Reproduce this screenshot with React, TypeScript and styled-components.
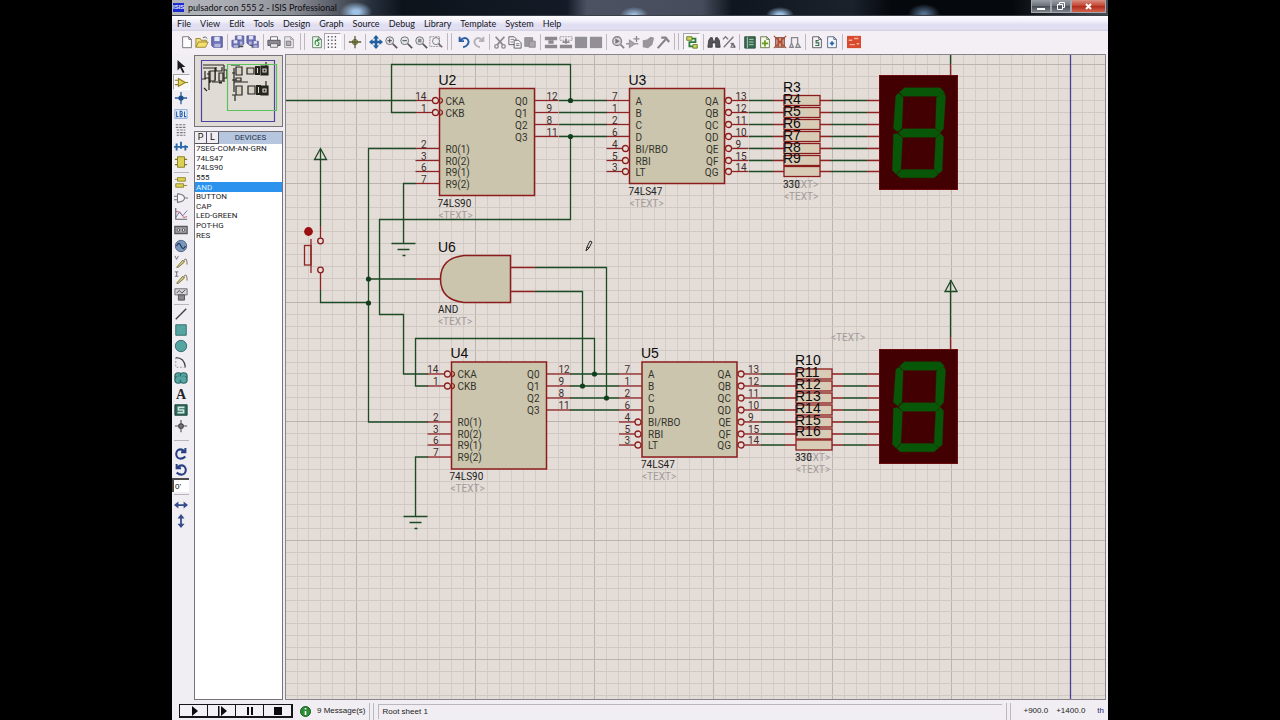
import React from 'react';
import styled, { createGlobalStyle, css } from 'styled-components';

const GlobalStyle = createGlobalStyle`
  * { box-sizing: border-box; }
  body { margin: 0; background: #000; font-family: Lato, 'Open Sans', sans-serif; }
  button, input { font: inherit; color: inherit; margin: 0; padding: 0; border: 0; background: none; }
  svg { display: block; }
`;

const Page = styled.div`
  min-height: 100vh;
  padding: 0 172px;
  display: flex;
  background: #000;
`;

const Window = styled.main`
  flex: 1;
  min-width: 0;
  display: flex;
  flex-direction: column;
  background: #f1eef3;
`;

/* ---------- title bar ---------- */

const TitleBar = styled.header`
  height: 16px;
  flex: none;
  display: flex;
  align-items: center;
  gap: 4px;
  padding-left: 1px;
  border-bottom: 1px solid #3b3f48;
  background:
    radial-gradient(ellipse 16px 10px at 184px 12px, #9fc3e6 20%, transparent),
    radial-gradient(ellipse 14px 8px at 462px 15px, #9dbfe0 10%, transparent),
    radial-gradient(ellipse 14px 8px at 608px 15px, #9dc2e6 20%, transparent),
    radial-gradient(ellipse 16px 10px at 752px 14px, #54708f 10%, transparent),
    linear-gradient(90deg, #b4b6bc 0, #a9abb2 60px, #8e9098 120px, #5b5f69 160px, #26303c 200px, #0d131b 230px,
      #141b26 395px, #4d5263 415px, #474c5c 530px, #10161f 560px, #1b222c 680px, #05080c 720px, #05080c 840px, #47505a 100%);
`;

const AppIcon = styled.span`
  width: 11px;
  height: 9px;
  background: #1c2bd0;
  color: #e8ecff;
  font: bold 6px/9px 'Liberation Sans', sans-serif;
  text-align: center;
`;

const Title = styled.h1`
  margin: 0;
  flex: 1;
  font-size: 9px;
  line-height: 14px;
  font-weight: 400;
  color: #0c0c10;
`;

const WindowButtons = styled.div`
  display: flex;
  align-self: flex-start;
  height: 13px;
  margin-right: 2px;
`;

const WindowButton = styled.button<{ $close?: boolean }>`
  width: ${(p) => (p.$close ? 35 : 20)}px;
  height: 13px;
  display: grid;
  place-items: center;
  border: 1px solid #a4a8ad;
  border-top: 0;
  background: ${(p) =>
    p.$close ? 'linear-gradient(#d99082, #c2402c 50%, #b02c1a 51%, #d4604c)' : 'linear-gradient(#9a9fa5, #6a7077 50%, #474d55 51%, #7c838a)'};
`;

/* ---------- menu ---------- */

const MenuBar = styled.nav`
  height: 15px;
  flex: none;
  display: flex;
  align-items: center;
  padding-left: 1px;
  background: linear-gradient(#fdfdff, #f1f0fa 35%, #dfddf1 60%, #e2e0f2 85%, #d0cedf);
`;

const MenuItem = styled.button`
  padding: 0 5px 0 4px;
  font-size: 9px;
  line-height: 14px;
  color: #16161c;
`;

/* ---------- tool bars ---------- */

const ToolBar = styled.div`
  height: 23px;
  flex: none;
  display: flex;
  align-items: center;
  padding: 0 0 2px 7px;
  background: #f3eff4;
  overflow: hidden;
`;

const ToolButton = styled.button<{ $active?: boolean; $side?: boolean }>`
  width: ${(p) => (p.$active ? 17 : 15)}px;
  height: ${(p) => (p.$side ? 16 : 17)}px;
  flex: none;
  display: grid;
  place-items: center;
  ${(p) => p.$active && css`
    border: 1px solid #a9a5ab;
    border-right-color: #fff;
    border-bottom-color: #fff;
    background: #f8f6f8;
  `}
`;

const Divider = styled.span<{ $wide?: boolean }>`
  width: ${(p) => (p.$wide ? 7 : 6)}px;
  height: 16px;
  flex: none;
  display: flex;
  justify-content: center;
  &::before { content: ''; width: 1px; background: #bdb8c0; }
`;

const Grip = styled.span`
  width: 13px;
  height: 17px;
  flex: none;
  display: flex;
  justify-content: center;
  gap: 3px;
  &::before, &::after { content: ''; width: 1px; background: #bdb8c0; }
`;

const Body = styled.div`
  flex: 1;
  min-height: 0;
  display: flex;
  padding-bottom: 2px;
`;

const SideTools = styled.div`
  width: 22px;
  flex: none;
  display: flex;
  flex-direction: column;
  align-items: center;
  padding: 4px 4px 0 0;
`;

const SideDivider = styled.span<{ $size: number }>`
  height: ${(p) => p.$size}px;
  width: 15px;
  flex: none;
  display: flex;
  flex-direction: column;
  justify-content: center;
  &::before { content: ''; height: 1px; background: #b9b4bb; }
`;

const AngleInput = styled.input`
  width: 17px;
  height: 14px;
  align-self: flex-start;
  padding-left: 1px;
  background: #fff;
  border: solid #4c4c4c;
  border-width: 2px 0 0 2px;
  font: 8px/10px 'Liberation Sans', sans-serif;
`;

/* ---------- side panel ---------- */

const SidePanel = styled.aside`
  width: 89px;
  flex: none;
  display: flex;
  flex-direction: column;
  gap: 4px;
  padding-top: 1px;
`;

const Preview = styled.div`
  height: 72px;
  flex: none;
  border: 1px solid #77737a;
  background: #e1dbd5;
  overflow: hidden;
`;

const DeviceBox = styled.section`
  flex: 1;
  display: flex;
  flex-direction: column;
  border: 1px solid #77737a;
  background: #fff;
  font-family: Roboto, sans-serif;
  font-size: 8px;
`;

const DeviceHeader = styled.div`
  height: 12px;
  flex: none;
  display: flex;
  background: #b7c6df;
  color: #22304c;
`;

const DeviceKey = styled.button`
  width: 12px;
  font-size: 9px;
  line-height: 11px;
  background: #f0eef2;
  color: #111;
  border: solid #55525a;
  border-width: 0 1px 1px 0;
`;

const DeviceTitle = styled.h2`
  margin: 0;
  flex: 1;
  font-size: 8px;
  line-height: 12px;
  font-weight: 400;
  text-align: center;
`;

const DeviceList = styled.ul`
  margin: 0;
  padding: 0;
  height: 96px;
  display: grid;
  grid-auto-rows: 1fr;
  list-style: none;
`;

const Device = styled.li<{ $selected?: boolean }>`
  display: flex;
  align-items: center;
  padding-left: 1px;
  line-height: 9px;
  white-space: nowrap;
  color: ${(p) => (p.$selected ? '#d6ecff' : '#1b1b1f')};
  background: ${(p) => (p.$selected ? '#2b93ee' : 'transparent')};
`;

/* ---------- sheet ---------- */

const Sheet = styled.section`
  flex: 1;
  min-width: 0;
  margin: 0 2px 0 2px;
  border: 1px solid #88848a;
  background: #e4ddd7;
  overflow: hidden;
  position: relative;
`;

const Drawing = styled.svg`
  position: absolute;
  inset: 0;
  width: 100%;
  height: 100%;
  font-family: Roboto, 'Liberation Sans', sans-serif;
  font-size: 10px;
  .wire { stroke: #1b4a25; fill: none; stroke-width: 1.3; }
  .pin { stroke: #8f2222; fill: none; stroke-width: 1.3; }
  .body { stroke: #8c1c1c; fill: #cbc5ae; stroke-width: 1.5; }
  .bubble { stroke: #8c1c1c; fill: #e4ddd7; stroke-width: 1.3; }
  .name { fill: #33332a; }
  .num { fill: #3f2c2c; }
  .ref { fill: #0c0c0c; font-family: 'Liberation Sans', sans-serif; font-size: 14px; }
  .part { fill: #222; }
  .hint { fill: #a29b9b; }
`;

/* ---------- status bar ---------- */

const StatusBar = styled.footer`
  height: 18px;
  flex: none;
  display: flex;
  align-items: center;
  padding: 0 4px 0 7px;
  font: 8px/14px 'Liberation Sans', sans-serif;
  color: #1b1b22;
  white-space: nowrap;
`;

const PlayGroup = styled.div`
  display: flex;
  height: 14px;
  border: 1px solid #16161a;
`;

const PlayButton = styled.button`
  width: 28px;
  display: grid;
  place-items: center;
  border: 1px solid #16161a;
  border-width: 0 1px 1px 0;
  background: #f3f1f4;
`;

const Messages = styled.span`
  display: flex;
  align-items: center;
  gap: 6px;
  padding-left: 7px;
`;

const SheetName = styled.span`
  flex: 1;
  height: 15px;
  padding-left: 3px;
  border: solid #bcb7bf;
  border-width: 1px 0 0 1px;
`;

const Coords = styled.span`
  display: flex;
  gap: 8px;
  padding-left: 8px;
  & > b { font-weight: 400; color: #25256e; padding-left: 4px; }
`;

/* ---------- icons ---------- */

const doc = (fill = '#fff', stroke = '#6c6870') => <path d="M3 2h7l3 3v9.500H3zM10 2v3h3" fill={fill} stroke={stroke} />;
const glass = (
  <>
    <circle cx="6.500" cy="6.500" r="4.500" fill="#e4e6ea" stroke="#66646c" />
    <path d="M10 10l5 5" stroke="#55535a" strokeWidth="2" />
  </>
);
const disk = (x: number, y: number, s: number) => (
  <g transform={`translate(${x} ${y}) scale(${s})`}>
    <path d="M0 0h12v12H2L0 10z" fill="#6f73b8" stroke="#45488a" />
    <path d="M3 0h6v5H3z" fill="#dfe2f3" />
    <path d="M3 8h7v4H3z" fill="#b5b8dc" />
  </g>
);

const icons: Record<string, React.ReactNode> = {
  new: doc(),
  open: <><path d="M1 14V4h5l1 2h6v2" fill="#f3dc7a" stroke="#94802c" /><path d="M1 14l3-6h11l-3 6z" fill="#f5e06c" stroke="#94802c" /><path d="M9 3q3-2 5 1" stroke="#555" fill="none" /></>,
  save: disk(2, 2, 1),
  importSection: <>{disk(5, 1, 0.8)}{disk(1, 6, 0.7)}<path d="M9 13h5" stroke="#444" strokeWidth="2" /></>,
  exportSection: <>{disk(1, 1, 0.8)}{disk(7, 7, 0.6)}<path d="M4 12h3v3" stroke="#444" fill="none" /></>,
  print: <><path d="M4 6V2h8v4" fill="#fff" stroke="#66636a" /><path d="M1 6h14v6H1z" fill="#8b8991" stroke="#4f4d55" /><path d="M4 10h8v4H4z" fill="#eee" stroke="#66636a" /></>,
  area: <>{doc('#e9e7ea', '#96939a')}<path d="M5 7h5v5H5z" fill="#b5b2b8" stroke="#77747b" /></>,
  redraw: <>{doc('#eef6ee', '#5b7a60')}<path d="M6 11V8q0-2 3-2M8 4.500L10 6 8 7.500M10 8v3q0 1-3 1" stroke="#2f8a3e" fill="none" strokeWidth="1.300" /></>,
  grid: <path d="M2 2h12M2 6h12M2 10h12M2 14h12" stroke="#55535a" strokeWidth="1.500" strokeDasharray="1.500 2.500" />,
  origin: <><circle cx="8" cy="8" r="3" fill="#b9b86a" stroke="#55552a" /><path d="M8 1v14M1 8h14" stroke="#5a5a34" strokeWidth="1.500" /></>,
  pan: <><path d="M8 2v12M2 8h12" stroke="#235f9f" strokeWidth="3" /><path d="M8 0l3.500 4h-7zM8 16l3.500-4h-7zM0 8l4-3.500v7zM16 8l-4-3.500v7z" fill="#235f9f" /></>,
  zoomIn: <>{glass}<path d="M4 6.500h5M6.500 4v5" stroke="#333" /></>,
  zoomOut: <>{glass}<path d="M4 6.500h5" stroke="#333" /></>,
  zoomAll: <>{glass}<path d="M4.500 4.500h4v4h-4z" fill="#8b8991" /></>,
  zoomArea: <><path d="M1 2h11v11H1z" fill="none" stroke="#88858c" strokeDasharray="2 1" /><circle cx="8" cy="7" r="4" fill="#eef0f4" stroke="#77747b" /><path d="M11 10l4 4" stroke="#66636a" strokeWidth="2" /></>,
  undo: <path d="M3 2v5h5M3 7q4-5 8-3 4 3 1 7-1 2-5 3" fill="none" stroke="#2b5ea8" strokeWidth="2.200" />,
  redo: <path d="M13 2v5H8M13 7Q9 2 5 4 1 7 4 11q1 2 5 3" fill="none" stroke="#b3b0b7" strokeWidth="2.200" />,
  cut: <><path d="M3 2l8 9M13 2L5 11" stroke="#8b888f" strokeWidth="2" /><circle cx="4" cy="13" r="2" fill="none" stroke="#8b888f" strokeWidth="1.500" /><circle cx="12" cy="13" r="2" fill="none" stroke="#8b888f" strokeWidth="1.500" /></>,
  copy: <><path d="M1 2h6l2 2v7H1z" fill="#f6f4f7" stroke="#55535a" /><path d="M7 6h5l3 3v6H7z" fill="#f6f4f7" stroke="#55535a" /><path d="M3 5h4M3 8h3M9 10h4M9 12h4" stroke="#77747b" /></>,
  paste: <><path d="M2 3h9v10H2z" fill="#99969d" stroke="#8b888f" /><path d="M7 7h7v7H7z" fill="#aaa7ae" stroke="#88858c" /></>,
  blockCopy: <><path d="M1 2h14v4H1zM1 11h14v4H1z" fill="#8b888f" /><path d="M5 8h6" stroke="#8b888f" strokeWidth="4" /></>,
  blockMove: <><path d="M1 2h14v4H1z" fill="none" stroke="#8b888f" strokeDasharray="2 1" /><path d="M1 11h14v4H1zM7 4h2v6H7zM4 7h8v2H4z" fill="#8b888f" /></>,
  block: <path d="M1 2h14v13H1z" fill="#929096" />,
  pick: <><circle cx="7" cy="7" r="5" fill="#d5d3d8" stroke="#85828a" strokeWidth="1.500" /><path d="M5 4l5 3-5 3z" fill="#77747b" /><path d="M11 11l4 4" stroke="#85828a" strokeWidth="2" /></>,
  make: <><path d="M4 6l6 4-6 4zM0 10h4M10 10h4" fill="#aaa7ae" stroke="#9a979e" strokeWidth="1.500" /><path d="M12 1v7M8.500 4.500h7" stroke="#8b888f" strokeWidth="1.500" /></>,
  pack: <path d="M2 6l5-1 4-3 4 1-2 8-5 4-6-1z" fill="#98959c" />,
  hammer: <path d="M2 15l9-10M6 3h5l4 5" fill="none" stroke="#85828a" strokeWidth="2.500" />,
  autoroute: <><path d="M2 2h6v4H2zM9 11h5v4H9z" fill="#d6d95a" stroke="#55731f" /><path d="M8 4h4v4H5v5h4" fill="none" stroke="#2d7a3a" strokeWidth="2" /></>,
  find: <path d="M1 14l1-8 2-3h2l1 4h2l1-4h2l2 3 1 8h-5V9H6v5z" fill="#55535a" stroke="#3c3a40" />,
  property: <><path d="M2 14L13 2M1 5l3-3 3 3M10 9l5 5" stroke="#77747b" strokeWidth="1.500" fill="none" /><path d="M10 14l2.500-5 2.500 5z" fill="none" stroke="#55535a" /></>,
  explorer: <><path d="M2 2h12v13H2z" fill="#3b6b51" stroke="#244634" /><path d="M5 2v13M7 5h5M7 8h5M7 11h5" stroke="#b9d6c4" /></>,
  addSheet: <>{doc('#f7fbe9', '#5f7040')}<path d="M8 6v7M4.500 9.500h7" stroke="#6b9a24" strokeWidth="2" /></>,
  delSheet: <><path d="M3 3h10v11H3z" fill="#c9a292" stroke="#6a4438" /><path d="M1 1l14 14M15 1L1 15M6 3v11M10 3v11" stroke="#b5482e" strokeWidth="1.500" /></>,
  exitSheet: <path d="M4 9V3h7v6M4 9l-2 5h4zM11 9l-2 5h5z" stroke="#8b888f" strokeWidth="1.500" fill="none" />,
  bom: <>{doc('#f5f5f5', '#55535a')}<path d="M10 6.500H7v2.500h3v3H6" fill="none" stroke="#3b6b51" strokeWidth="1.300" /></>,
  erc: <>{doc('#f5f8ff', '#55607a')}<path d="M8 7v5M5.500 9.500h5" stroke="#2b6ba8" strokeWidth="2" /></>,
  ares: <><path d="M0 1h16v14H0z" fill="#d9492c" /><path d="M2 6h4M8 4h5M3 11h6M11 10h3" stroke="#f7b09c" strokeWidth="1.500" /></>,

  arrow: <path d="M4 1l9 8H9l3 6-2 1-3-6-3 3z" fill="#1c1c20" />,
  component: <path d="M5 4l8 4.500L5 13zM1 6h4M1 11h4M13 8.500h3" fill="#e4d250" stroke="#8c7c22" strokeWidth="1.200" />,
  junction: <><path d="M8 1v14M1 8h14" stroke="#2b5e9a" strokeWidth="1.500" /><circle cx="8" cy="8" r="3" fill="#1d4f8d" /></>,
  label: <><path d="M1 3h14v10H1z" fill="#e6eefb" stroke="#7ea3d4" /><path d="M3 5v6h2M7 5v6h1.500q2-1.500 0-3 2-1.500 0-3zM12 5v6h2" stroke="#2b5ea8" fill="none" strokeWidth="1.200" /></>,
  script: <path d="M2 2h12M2 5h12M3 8h10M3 11h10M3 14h10" stroke="#77747b" strokeWidth="1.300" strokeDasharray="3 1" />,
  bus: <path d="M0 9h16M3 13V5M8 11V3M13 13V7" stroke="#2b6aa8" strokeWidth="2.200" />,
  subcircuit: <><path d="M4 2h8v12H4z" fill="#ddd054" stroke="#7e7626" /><path d="M1 5h3M1 11h3M12 5h3M12 11h3" stroke="#7e7626" strokeWidth="1.500" /></>,
  terminal: <><path d="M4 3h9v4H4zM2 10h9v4H2z" fill="#ded253" stroke="#8c8023" /><path d="M1 5h3M11 12h4" stroke="#8c8023" /></>,
  devicePin: <path d="M4 3v10q8-1 8-5T4 3M0 6h4M0 10h4M12 8h4" fill="#f6f5f7" stroke="#77747b" strokeWidth="1.200" />,
  graph: <><path d="M2 1v13h13" stroke="#66636a" fill="none" strokeWidth="1.300" /><path d="M2 12l4-6 4 4 5-6" stroke="#5b6ca8" fill="none" /><path d="M2 5l5 1 4 6 4-1" stroke="#a85b6a" fill="none" /></>,
  tape: <><path d="M1 4h14v8H1z" fill="#a7a4ab" stroke="#5b5960" strokeWidth="1.500" /><circle cx="5" cy="8" r="1.500" fill="#fff" stroke="#444" /><circle cx="11" cy="8" r="1.500" fill="#fff" stroke="#444" /></>,
  generator: <><circle cx="8" cy="8" r="6.500" fill="#7b96ba" stroke="#4b6283" /><path d="M3 8q2.500-6 5 0t5 0" fill="none" stroke="#1f355a" strokeWidth="1.300" /></>,
  voltage: <><path d="M1 1l2 4 2-4" fill="none" stroke="#66636a" /><path d="M3 14l7-8 2 2-7 6z" fill="#ddd073" stroke="#6c6840" /><path d="M11 7q2-4 3-2t1 6" fill="none" stroke="#6c6840" /></>,
  current: <><path d="M3 1v5M1 1h4M1 6h4" fill="none" stroke="#66636a" /><path d="M3 14l7-8 2 2-7 6z" fill="#ddd073" stroke="#6c6840" /><path d="M11 7q2-4 3-2t1 6" fill="none" stroke="#6c6840" /></>,
  instrument: <><path d="M1 2h14v7H1z" fill="#d4d2d7" stroke="#66636a" /><path d="M3 7l3-3 3 3 4-4" stroke="#444" fill="none" /><path d="M5 9h7v6H5z" fill="#8b888f" stroke="#4f4d55" /></>,
  line: <path d="M2 14L14 2" stroke="#44424a" strokeWidth="1.600" />,
  box: <path d="M2 2h12v12H2z" fill="#55a5a3" stroke="#2c6664" />,
  circle: <circle cx="8" cy="8" r="6.500" fill="#55a5a3" stroke="#2c6664" />,
  arc: <><path d="M2 3q10 0 11 11" fill="none" stroke="#44424a" strokeWidth="1.400" /><path d="M2 3v11h11" fill="none" stroke="#88858c" strokeDasharray="2 2" /></>,
  path: <><g fill="#55a5a3" stroke="#2c6664" strokeWidth="1.400"><circle cx="5" cy="6" r="4" /><circle cx="11" cy="6" r="4" /><circle cx="5" cy="10" r="4" /><circle cx="11" cy="10" r="4" /></g><path d="M3 6h10v4H3z" fill="#55a5a3" /></>,
  symbol: <><path d="M1 2h14v12H1z" fill="#2f6b5d" stroke="#163a31" /><path d="M12 5H5v3h6v3H4" fill="none" stroke="#cfe5dd" strokeWidth="1.800" /></>,
  marker: <><path d="M8 1v14M1 8h14" stroke="#55535a" strokeWidth="1.300" /><circle cx="8" cy="8" r="2.500" fill="none" stroke="#44424a" strokeWidth="1.500" /></>,
  cw: <path d="M13 1v5H8M12 5Q8 1 4 4 1 8 4 12q4 3 9-1" fill="none" stroke="#2a4186" strokeWidth="2.300" />,
  ccw: <path d="M3 1v5h5M4 5q4-4 8-1 3 4 0 8-4 3-9-1" fill="none" stroke="#2a4186" strokeWidth="2.300" />,
  flipH: <path d="M0 8l5-4v3h6V4l5 4-5 4V9H5v3z" fill="#354b8c" />,
  flipV: <path d="M8 0l4 5H9v6h3l-4 5-4-5h3V5H4z" fill="#354b8c" />,
};

const TextGlyph = styled.span`
  font: bold 14px/15px 'Liberation Serif', serif;
  color: #26242a;
`;

const Icon = ({ name }: { name: string }) => (
  <svg width="14" height="14" viewBox="0 0 16 16" fill="none" aria-hidden="true">{icons[name]}</svg>
);

const topTools = [
  'new', 'open', 'save', '|', 'importSection', 'exportSection', '|', 'print', 'area', '#',
  'redraw', '*grid', '|', 'origin', '|', 'pan', 'zoomIn', 'zoomOut', 'zoomAll', 'zoomArea', '#',
  'undo', 'redo', '|', 'cut', 'copy', 'paste', '|', 'blockCopy', 'blockMove', 'block', 'block', '||',
  'pick', 'make', 'pack', 'hammer', '#', '*autoroute', '|', 'find', 'property', '|',
  'explorer', 'addSheet', 'delSheet', 'exitSheet', '||', 'bom', 'erc', '||', 'ares',
];

const modeTools = ['arrow', '*component', 'junction', 'label', 'script', 'bus', 'subcircuit'];
const gadgetTools = ['terminal', 'devicePin', 'graph', 'tape', 'generator', 'voltage', 'current', 'instrument'];
const shapeTools = ['line', 'box', 'circle', 'arc', 'path', 'A', 'symbol', 'marker'];

const Tool = ({ id, side }: { id: string; side?: boolean }) => {
  const name = id.replace('*', '');
  return (
    <ToolButton type="button" aria-label={name} $active={id.startsWith('*')} $side={side}>
      {name === 'A' ? <TextGlyph>A</TextGlyph> : <Icon name={name} />}
    </ToolButton>
  );
};

/* ---------- schematic ---------- */

const PITCH = 11.9;
const rowY = (i: number) => Math.round(i * PITCH);

const GridLines = () => {
  const lines: React.ReactNode[] = [];
  for (let i = -6; i < 160; i++) {
    const x = Math.round(356 + i * PITCH) + 0.5;
    lines.push(<path key={`v${i}`} d={`M${x} 0V2000`} stroke={i % 10 === 0 ? '#bab3ae' : '#d2cbc6'} />);
  }
  for (let i = 0; i < 160; i++) {
    const y = Math.round(64 + i * PITCH) + 0.5;
    lines.push(<path key={`h${i}`} d={`M0 ${y}H2400`} stroke={i % 10 === 0 ? '#bab3ae' : '#cfc8c3'} />);
  }
  return <g>{lines}</g>;
};

type Place = { x: number; y: number; id: string };

/* x, y mark the body's top left corner; pins start 12 below it */
const Counter = ({ x, y, id }: Place) => {
  const left: [number, string, string][] = [[0, '14', 'CKA'], [1, '1', 'CKB'], [4, '2', 'R0(1)'], [5, '3', 'R0(2)'], [6, '6', 'R9(1)'], [7, '7', 'R9(2)']];
  const right: [number, string, string][] = [[0, '12', 'Q0'], [1, '9', 'Q1'], [2, '8', 'Q2'], [3, '11', 'Q3']];
  return (
    <g transform={`translate(${x} ${y})`}>
      <rect className="body" width="95" height="107" />
      <text className="ref" x="-1" y="-4">{id}</text>
      {left.map(([r, n, label]) => (
        <g key={label} transform={`translate(0 ${12 + rowY(r)})`}>
          <path className="pin" d={r < 2 ? 'M-24 0H-7' : 'M-24 0H0'} />
          {r < 2 && <><circle className="bubble" cx="-4" r="3" /><path className="pin" d="M0-3Q3-2 3 0T0 3" /></>}
          <text className="num" x="-13" y="-1" textAnchor="end">{n}</text>
          <text className="name" x="6" y="4">{label}</text>
        </g>
      ))}
      {right.map(([r, n, label]) => (
        <g key={label} transform={`translate(95 ${12 + rowY(r)})`}>
          <path className="pin" d="M0 0H24" />
          <text className="num" x="12" y="-1">{n}</text>
          <text className="name" x="-7" y="4" textAnchor="end">{label}</text>
        </g>
      ))}
      <text className="part" x="-2" y="118">74LS90</text>
      <text className="hint" x="-1" y="130">&lt;TEXT&gt;</text>
    </g>
  );
};

const Decoder = ({ x, y, id }: Place) => {
  const left = [['7', 'A'], ['1', 'B'], ['2', 'C'], ['6', 'D'], ['4', 'BI/RBO'], ['5', 'RBI'], ['3', 'LT']];
  const right = [['13', 'QA'], ['12', 'QB'], ['11', 'QC'], ['10', 'QD'], ['9', 'QE'], ['15', 'QF'], ['14', 'QG']];
  return (
    <g transform={`translate(${x} ${y})`}>
      <rect className="body" width="95" height="95" />
      <text className="ref" x="-1" y="-4">{id}</text>
      {left.map(([n, label], r) => (
        <g key={label} transform={`translate(0 ${12 + rowY(r)})`}>
          <path className="pin" d={r > 3 ? 'M-23 0H-7' : 'M-23 0H0'} />
          {r > 3 && <circle className="bubble" cx="-4" r="3" />}
          <text className="num" x="-12" y="-1" textAnchor="end">{n}</text>
          <text className="name" x="6" y="4">{label}</text>
        </g>
      ))}
      {right.map(([n, label], r) => (
        <g key={label} transform={`translate(95 ${12 + rowY(r)})`}>
          <circle className="bubble" cx="4" r="3" />
          <path className="pin" d="M7 0H24" />
          <text className="num" x="11" y="-1">{n}</text>
          <text className="name" x="-6" y="4" textAnchor="end">{label}</text>
        </g>
      ))}
      <text className="part" x="-1" y="106">74LS47</text>
      <text className="hint" x="0" y="118">&lt;TEXT&gt;</text>
    </g>
  );
};

/* seven series resistors from the decoder outputs to the display at x = 879 */
const Resistors = ({ x, y, from, first }: { x: number; y: number; from: number; first: number }) => {
  const rows = [0, 1, 2, 3, 4, 5, 6];
  return (
    <g>
      {rows.map((i) => (
        <g key={i} transform={`translate(0 ${y + rowY(i)})`}>
          <path className="wire" d={`M${from} 0H${x - 11}M${x + 47} 0H867`} />
          <path className="pin" d={`M${x - 11} 0H${x}M${x + 36} 0H${x + 47}M867 0H879`} />
          <rect x={x} y="-5" width="36" height="10" fill="#d9ccb7" stroke="#8c1c1c" strokeWidth="1.3" />
        </g>
      ))}
      {rows.map((i) => (
        <text key={i} className="ref" x={x - 1} y={y + rowY(i) - 9}>{`R${first + i}`}</text>
      ))}
      <text className="hint" x={x} y={y + 87}>&lt;TEXT&gt;</text>
      <text className="part" x={x - 1} y={y + 87}>330</text>
      <text className="hint" x={x} y={y + 99}>&lt;TEXT&gt;</text>
    </g>
  );
};

const Display = ({ y }: { y: number }) => (
  <g transform={`translate(879.5 ${y})`}>
    <rect width="78" height="114" fill="#430002" stroke="#6d0c0c" />
    <g transform="scale(0.3333)" fill="#085708" stroke="#085708">
      <path d="M60 50L75 37H182L195 50L176 62H70z" />
      <path d="M49 60L58 53L71 65L67 158L55 169L42 159z" />
      <path d="M171 66L184 54L195 54L198 64L192 160L182 170L168 158z" />
      <path d="M57 172L70 160H168L183 172L168 185H69z" />
      <path d="M42 176L54 174L69 187L64 281L50 296L39 284z" />
      <path d="M169 186L183 174L192 184L188 286L177 295L164 282z" />
      <path d="M52 297L66 282H164L176 296L164 307H62z" />
    </g>
  </g>
);

const Dot = ({ x, y }: { x: number; y: number }) => <circle cx={x} cy={y} r="2.600" fill="#12401c" />;
const Ground = ({ x, y }: { x: number; y: number }) => (
  <path className="wire" d={`M${x - 12} ${y}h24M${x - 6} ${y + 6}h12M${x - 1} ${y + 12}h3`} />
);
const Power = ({ x, y }: { x: number; y: number }) => <path className="wire" d={`M${x} ${y}l-6 11h12z`} />;

const busRows = (y: number, x1: number, x2: number) => [0, 1, 2, 3].map((i) => `M${x1} ${y + rowY(i)}H${x2}`).join('');

const Schematic = () => (
  <Drawing role="img" aria-label="Root sheet 1">
    <g transform="translate(-286 -55)">
      <GridLines />
      <path d="M1070.500 0V2000" stroke="#4a3f9c" strokeWidth="1.300" />

      <path className="wire" d={
        'M286 100.500H416M416 112.500H391.500V64.500H570.500V100.500' +
        'M570.500 136.500V219.500H379.500V314.500H403.500V374H428' +
        'M416 148.500H368.500V422H428M416 183.500H403.500V243.500' +
        'M368.500 279H416M535 267.500H606.500V398M535 291.500H582.500V386' +
        'M428 386H415.500V338.500H594.500V374' +
        'M428 457H415.500V516.500' +
        'M320.500 149V226M320.500 290V302.500H368.500' +
        'M950.500 50V64M950.500 280V337' +
        busRows(100.5, 559, 607) + busRows(374, 570, 619)
      } />
      <path className="pin" d="M950.500 64V76M950.500 337V350M416 279H440M511 267.500H535M511 291.500H535" />
      <Ground x={403.5} y={243.5} />
      <Ground x={415.5} y={516.5} />
      <Power x={320.5} y={148.5} />
      <Power x={951} y={280.5} />

      <g>
        <path className="pin" d="M320.500 226V238M320.500 273V290M311 239V273" />
        <rect className="pin" x="304.500" y="245.500" width="6.500" height="19.500" />
        <circle className="bubble" cx="320.500" cy="241" r="2.800" />
        <circle className="bubble" cx="320.500" cy="270" r="2.800" />
        <circle cx="308.500" cy="231.500" r="4.400" fill="#9b0f12" />
      </g>

      <Counter x={439.5} y={88.5} id="U2" />
      <Decoder x={629.5} y={88.5} id="U3" />
      <Counter x={451.5} y={362} id="U4" />
      <Decoder x={642} y={362} id="U5" />

      <path className="body" d="M510.500 255.500V302.500H464Q440.500 300 440.500 279T464 255.500z" />
      <text className="ref" x="438" y="252">U6</text>
      <text className="part" x="438" y="313">AND</text>
      <text className="hint" x="438" y="325">&lt;TEXT&gt;</text>

      <Resistors x={784} y={100.5} from={749} first={3} />
      <Resistors x={796} y={374} from={761} first={10} />
      <text className="hint" x="831" y="341">&lt;TEXT&gt;</text>
      <Display y={75.5} />
      <Display y={349.5} />

      <Dot x={570.5} y={100.5} />
      <Dot x={570.5} y={136.5} />
      <Dot x={368.5} y={279} />
      <Dot x={368.5} y={303} />
      <Dot x={594.5} y={374} />
      <Dot x={582.5} y={386} />
      <Dot x={606.5} y={398} />

      <path d="M586 251l1-4 3-6 2 1-3 6zM587 247l2 1" fill="#e9e4df" stroke="#222" strokeWidth="1" />
    </g>
  </Drawing>
);

const Overview = () => (
  <svg width="87" height="71" viewBox="195 56 87 71" fill="none" stroke="#26241f" strokeWidth="1.200" aria-label="Overview" role="img">
    <path d="M203 65H224M203 68H215V80M205 71v7h5v5M207 74h5M202 79h4M209 71v19M216 67v4h6v-4M224 65v17M212 82h10M219 83h3M204 88l3 3M224 70h3v8h-3M231 65h9M234 68v24M232 73h3M232 80h8M234 82h14M232 95h3v6" />
    <path d="M210 71h5v10h-5zM219 73h4v8h-4zM236 67h6v8h-6zM236 86h6v9h-6zM247 68h7v6h-7zM248 86h7v8h-7zM236 78h5v3h-5z" fill="#d8d2c6" />
    <path d="M256 67h3v7h-3zM257 86h3v8h-3z" strokeWidth="2" />
    <path d="M261 66h7v9h-7zM261 86h7v9h-7z" fill="#26241f" />
    <path d="M263 69h3v3h-3zM263 89h3v3h-3z" stroke="#d8d2c6" />
    <path d="M266 62v4M266 81v5" />
    <path d="M201.500 60.500h73v61h-73z" stroke="#4a46a0" />
    <path d="M227.500 64.500h49v46h-49z" stroke="#5cc25c" />
  </svg>
);

const menus = ['File', 'View', 'Edit', 'Tools', 'Design', 'Graph', 'Source', 'Debug', 'Library', 'Template', 'System', 'Help'];
const devices = ['7SEG-COM-AN-GRN', '74LS47', '74LS90', '555', 'AND', 'BUTTON', 'CAP', 'LED-GREEN', 'POT-HG', 'RES'];
const playback: [string, string][] = [
  ['Play', 'M5 1l6 5-6 5z'],
  ['Step', 'M3 1h1.500v10H3zM6 1l6 5-6 5z'],
  ['Pause', 'M4 2h2v8H4zM8 2h2v8H8z'],
  ['Stop', 'M3 2h8v8H3z'],
];

export default function App() {
  return (
    <>
      <GlobalStyle />
      <Page>
        <Window>
          <TitleBar>
            <AppIcon>ISIS</AppIcon>
            <Title>pulsador con 555 2 - ISIS Professional</Title>
            <WindowButtons>
              <WindowButton type="button" aria-label="Minimize">
                <svg width="10" height="9"><path d="M1 6h8v2H1z" fill="#fff" /></svg>
              </WindowButton>
              <WindowButton type="button" aria-label="Restore">
                <svg width="10" height="10" fill="none" stroke="#fff"><path d="M3.500 3V1.500h5v5H7M1.500 3.500h5v5h-5z" /></svg>
              </WindowButton>
              <WindowButton type="button" aria-label="Close" $close>
                <svg width="9" height="9" stroke="#fff" strokeWidth="2"><path d="M2 2l5 5M7 2L2 7" /></svg>
              </WindowButton>
            </WindowButtons>
          </TitleBar>

          <MenuBar>
            {menus.map((m) => <MenuItem key={m} type="button">{m}</MenuItem>)}
          </MenuBar>

          <ToolBar role="toolbar">
            {topTools.map((t, i) => {
              if (t === '#') return <Grip key={i} />;
              if (t.startsWith('|')) return <Divider key={i} $wide={t.length > 1} />;
              return <Tool key={i} id={t} />;
            })}
          </ToolBar>

          <Body>
            <SideTools role="toolbar">
              {modeTools.map((t) => <Tool key={t} id={t} side />)}
              <SideDivider $size={4} />
              {gadgetTools.map((t) => <Tool key={t} id={t} side />)}
              <SideDivider $size={4} />
              {shapeTools.map((t) => <Tool key={t} id={t} side />)}
              <SideDivider $size={12} />
              <Tool id="cw" side />
              <Tool id="ccw" side />
              <AngleInput aria-label="Rotation angle" defaultValue="0'" />
              <SideDivider $size={5} />
              <Tool id="flipH" side />
              <Tool id="flipV" side />
            </SideTools>

            <SidePanel>
              <Preview><Overview /></Preview>
              <DeviceBox>
                <DeviceHeader>
                  <DeviceKey type="button">P</DeviceKey>
                  <DeviceKey type="button">L</DeviceKey>
                  <DeviceTitle>DEVICES</DeviceTitle>
                </DeviceHeader>
                <DeviceList>
                  {devices.map((d) => <Device key={d} $selected={d === 'AND'}>{d}</Device>)}
                </DeviceList>
              </DeviceBox>
            </SidePanel>

            <Sheet><Schematic /></Sheet>
          </Body>

          <StatusBar>
            <PlayGroup>
              {playback.map(([label, d]) => (
                <PlayButton key={label} type="button" aria-label={label}>
                  <svg width="14" height="12"><path d={d} fill="#0c0c10" /></svg>
                </PlayButton>
              ))}
            </PlayGroup>
            <Messages>
              <svg width="11" height="11" viewBox="0 0 11 11">
                <circle cx="5.500" cy="5.500" r="5" fill="#2c8f35" stroke="#1b5a22" />
                <path d="M5.500 2v1.500M5.500 5v4" stroke="#fff" strokeWidth="1.600" />
              </svg>
              9 Message(s)
            </Messages>
            <Grip />
            <SheetName>Root sheet 1</SheetName>
            <Grip />
            <Coords><span>+900.0</span><span>+1400.0</span><b>th</b></Coords>
          </StatusBar>
        </Window>
      </Page>
    </>
  );
}
